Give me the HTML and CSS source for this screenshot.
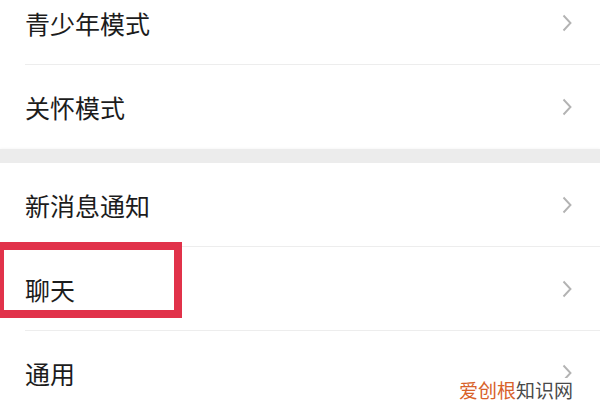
FILE: index.html
```html
<!DOCTYPE html>
<html lang="zh-CN">
<head>
  <meta charset="UTF-8">
  <title>设置</title>
  <link rel="stylesheet" href="styles.css">
</head>
<body>
  <div class="page">
    <div class="group group-top">
      <div class="row">
        <div class="row-inner">
          <span class="label">青少年模式</span>
          <svg class="chevron" viewBox="0 0 10 18"><path d="M1.5 1.5 L8.5 9 L1.5 16.5"/></svg>
        </div>
      </div>
      <div class="row">
        <div class="row-inner last">
          <span class="label">关怀模式</span>
          <svg class="chevron" viewBox="0 0 10 18"><path d="M1.5 1.5 L8.5 9 L1.5 16.5"/></svg>
        </div>
      </div>
    </div>

    <div class="band"></div>

    <div class="group">
      <div class="row">
        <div class="row-inner">
          <span class="label">新消息通知</span>
          <svg class="chevron" viewBox="0 0 10 18"><path d="M1.5 1.5 L8.5 9 L1.5 16.5"/></svg>
        </div>
      </div>
      <div class="row highlighted">
        <div class="mark"></div>
        <div class="row-inner">
          <span class="label">聊天</span>
          <svg class="chevron" viewBox="0 0 10 18"><path d="M1.5 1.5 L8.5 9 L1.5 16.5"/></svg>
        </div>
      </div>
      <div class="row">
        <div class="row-inner last">
          <span class="label">通用</span>
          <svg class="chevron" viewBox="0 0 10 18"><path d="M1.5 1.5 L8.5 9 L1.5 16.5"/></svg>
        </div>
      </div>
    </div>

    <div class="watermark"><span class="wm-brand">爱创根</span>知识网</div>
  </div>
</body>
</html>
```

FILE: styles.css
```css
body {
  margin: 0;
  background: #ffffff;
  font-family: "Noto Sans CJK SC", "Noto Sans", sans-serif;
  overflow: hidden;
}
.page {
  position: relative;
  width: 600px;
  height: 405px;
  overflow: hidden;
}
.group { background: #fff; }
.group-top { margin-top: -19px; }
.row {
  position: relative;
  height: 84px;
  padding-left: 25px;
}
.row-inner {
  height: 83px;
  display: flex;
  align-items: center;
  justify-content: space-between;
  padding-right: 28px;
  border-bottom: 1px solid #ededed;
}
.row-inner.last { border-bottom-color: transparent; }
.label {
  font-size: 25px;
  color: #1c1c1c;
}
.chevron {
  width: 10px;
  height: 18px;
  fill: none;
  stroke: #b3b3b3;
  stroke-width: 1.9;
}
.band {
  height: 14px;
  background: #ececec;
  box-shadow: 0 0 3px #f2f2f2;
}
.mark {
  position: absolute;
  left: -4px;
  top: -5px;
  width: 170px;
  height: 60px;
  border: 8px solid #e1324a;
}
.watermark {
  position: absolute;
  right: 26px;
  bottom: 3px;
  background: #fff;
  padding: 0 1px;
  font-size: 19px;
  line-height: 24px;
  color: #4a4a4a;
}
.wm-brand { color: #d8622a; }
```
